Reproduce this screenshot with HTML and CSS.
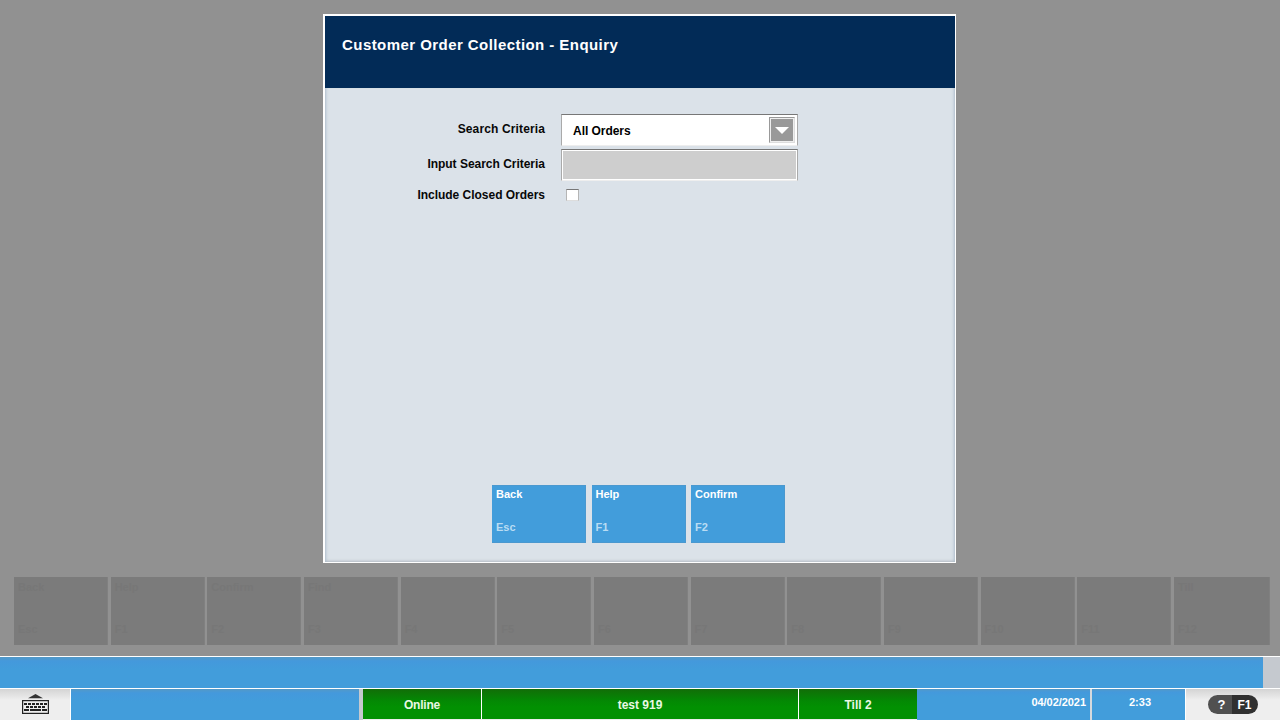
FILE: index.html
```html
<!DOCTYPE html>
<html lang="en">
<head>
<meta charset="utf-8">
<title>Customer Order Collection - Enquiry</title>
<link rel="stylesheet" href="styles.css">
</head>
<body>
<main class="stage">
  <section class="dialog">
    <header class="dialog-head"><h1 class="title">Customer Order Collection - Enquiry</h1></header>
    <div class="dialog-body">
      <form class="form">
        <label class="label">Search Criteria</label>
        <div class="select"><span class="select-value">All Orders</span><span class="select-button"><svg width="14" height="7" viewBox="0 0 14 7"><path d="M0 0h14L7 7z" fill="#fff"/></svg></span></div>
        <label class="label label-tight">Input Search Criteria</label>
        <div class="input"></div>
        <label class="label label-tight label-check">Include Closed Orders</label>
        <div class="check"></div>
      </form>
      <div class="actions">
        <div class="action"><span class="action-name">Back</span><span class="action-key">Esc</span></div>
        <div class="action"><span class="action-name">Help</span><span class="action-key">F1</span></div>
        <div class="action"><span class="action-name">Confirm</span><span class="action-key">F2</span></div>
      </div>
    </div>
  </section>
</main>
<nav class="keys">
  <div class="key"><span>Back</span><span>Esc</span></div>
  <div class="key"><span>Help</span><span>F1</span></div>
  <div class="key"><span>Confirm</span><span>F2</span></div>
  <div class="key"><span>Find</span><span>F3</span></div>
  <div class="key"><span></span><span>F4</span></div>
  <div class="key"><span></span><span>F5</span></div>
  <div class="key"><span></span><span>F6</span></div>
  <div class="key"><span></span><span>F7</span></div>
  <div class="key"><span></span><span>F8</span></div>
  <div class="key"><span></span><span>F9</span></div>
  <div class="key"><span></span><span>F10</span></div>
  <div class="key"><span></span><span>F11</span></div>
  <div class="key"><span>Till</span><span>F12</span></div>
</nav>
<div class="message"><div class="message-bar"></div></div>
<footer class="status">
  <div class="keyboard"><svg width="28" height="21" viewBox="0 0 28 21"><path d="M6 4.2 13.5 0 21 4.2z" fill="#333"/><rect x=".6" y="6.6" width="25.8" height="12.8" fill="#eee" stroke="#222" stroke-width="1.2"/><path d="M2 10h3m1 0h3m1 0h3m1 0h3m1 0h3m1 0h3M4 13h3m1 0h3m1 0h3m1 0h3m1 0h3M2 16h5m1 0h11m1 0h5" stroke="#222" stroke-width="1.8"/></svg></div>
  <div class="blank"></div>
  <div class="green online">Online</div>
  <div class="green user">test 919</div>
  <div class="green till">Till 2</div>
  <div class="blue date">04/02/2021</div>
  <div class="blue time">2:33</div>
  <div class="help"><div class="pill"><span class="pill-mark">?</span><span class="pill-key">F1</span></div></div>
</footer>
</body>
</html>
```
FILE: styles.css
```css
* { box-sizing: border-box; }
body {
  margin: 0; width: 1280px; height: 720px; overflow: hidden;
  display: flex; flex-direction: column;
  background: #919191;
  font-family: "Liberation Sans", Arial, sans-serif; font-weight: bold; font-size: 12px;
}
.stage { height: 577px; padding: 14px 0 0 323px; }
.dialog {
  width: 633px; height: 549px; border: 1px solid #fff; border-width: 2px 1px 1px 2px;
  display: flex; flex-direction: column;
}
.dialog-head { height: 72px; background: #022b57; padding: 20px 17px; }
.title { margin: 0; font-size: 15px; line-height: 18px; color: #fff; letter-spacing: .44px; white-space: nowrap; }
.dialog-body {
  flex: 1; background: #dbe2e9; box-shadow: inset 3px 0 3px -2px #aebdcb, inset -3px 0 3px -2px #aebdcb, inset 0 -3px 3px -2px #b5bcc4;
  padding: 26px 0 19px; display: flex; flex-direction: column; justify-content: space-between;
}
.form { display: grid; grid-template-columns: 220px 237px; column-gap: 16px; grid-template-rows: 33px 32px 17px; row-gap: 2px; }
.label { text-align: right; line-height: 14px; padding-top: 8px; color: #080808; letter-spacing: .13px; white-space: nowrap; }
.label-tight { letter-spacing: -.02px; }
.label-check { padding-top: 5px; }
.select {
  height: 32px; background: #fff; border: 1px solid #aaa; border-top: 1px solid #777; border-bottom-color: #eee;
  display: flex; justify-content: space-between; padding: 2px 2px 0 11px;
}
.select-value { line-height: 29px; color: #000; letter-spacing: -.04px; }
.select-button {
  width: 26px; height: 26px; background: #999; border: 1px solid #999; border-right-color: #ddd; border-bottom-color: #ddd; box-shadow: inset 0 0 0 1px #eee;
  display: flex; align-items: center; justify-content: center;
}
.input { height: 32px; border: 1px solid #aaa; border-top-color: #777; border-bottom-color: #eee; background: #cecece; box-shadow: inset 0 0 0 1px #fff; }
.check { width: 13px; height: 12px; margin: 6px 0 0 5px; background: #fff; border: 1px solid #b5b5b5; border-top-color: #777; border-bottom-color: #ddd; }
.actions { display: flex; gap: 5.5px; padding-left: 167px; }
.action {
  width: 94px; height: 58px; background: #429ddb; color: #fff; font-size: 11px; line-height: 13px;
  border: 1px solid #4a98cf; border-width: 1px 1px 1px 0;
  padding: 2px 4px 8px; display: flex; flex-direction: column; justify-content: space-between;
}
.action-key { color: #b9dcf3; }
.keys { height: 79px; padding: 0 10.5px 11px 14px; display: grid; grid-template-columns: repeat(12, 94.17px) 1fr; column-gap: 2.5px; }
.key {
  background: #7b7b7b; color: #777; border-right: 1px solid #808080; font-size: 11px; line-height: 13px;
  padding: 4px 4px 9px; display: flex; flex-direction: column; justify-content: space-between;
}
.key span { min-height: 13px; }
.message { height: 33px; border: 1px solid #fff; border-width: 1px 0; background: #c5c9cf; }
.message-bar { width: 1263px; height: 100%; background: linear-gradient(#5499c6, #4499dc 4px, #429ddb 12px); }
.status { flex: 1; display: flex; background: #eee; }
.keyboard { width: 71px; padding: 5px 0 0 22px; background: linear-gradient(#d4d4d4, #eee 11px); border-right: 1px solid #fff; }
.keyboard svg { display: block; }
.blank { width: 292px; background: linear-gradient(#5499c6, #4499dc 4px, #429ddb 12px); border-right: 4px solid #c5c9cf; }
.green {
  height: 30px; background: linear-gradient(#126d08, #048704 11px, #029002 18px); color: #e9f8e3;
  text-align: center; line-height: 32px;
}
.online { width: 119px; border-right: 1px solid #fff; letter-spacing: -.2px; }
.user { width: 317px; border-right: 1px solid #fff; }
.till { width: 118px; }
.blue { background: linear-gradient(#5499c6, #4499dc 3px, #429ddb 8px); color: #fff; font-size: 11px; line-height: 27px; }
.date { width: 175px; border-right: 2px solid #d5d9dd; padding-right: 4px; text-align: right; letter-spacing: -.05px; }
.time { width: 93px; padding-left: 3px; text-align: center; }
.help { flex: 1; padding: 6px 0 0 22px; background: linear-gradient(#d4d4d4, #eee 11px); border-left: 1px solid #fff; }
.pill { width: 50px; height: 19px; border-radius: 10px; overflow: hidden; display: flex; color: #fff; line-height: 20px; text-align: center; }
.pill-mark { width: 24px; background: #505050; padding-left: 3px; font-size: 13px; }
.pill-key { width: 26px; background: #303030; padding-right: 1px; }
```
